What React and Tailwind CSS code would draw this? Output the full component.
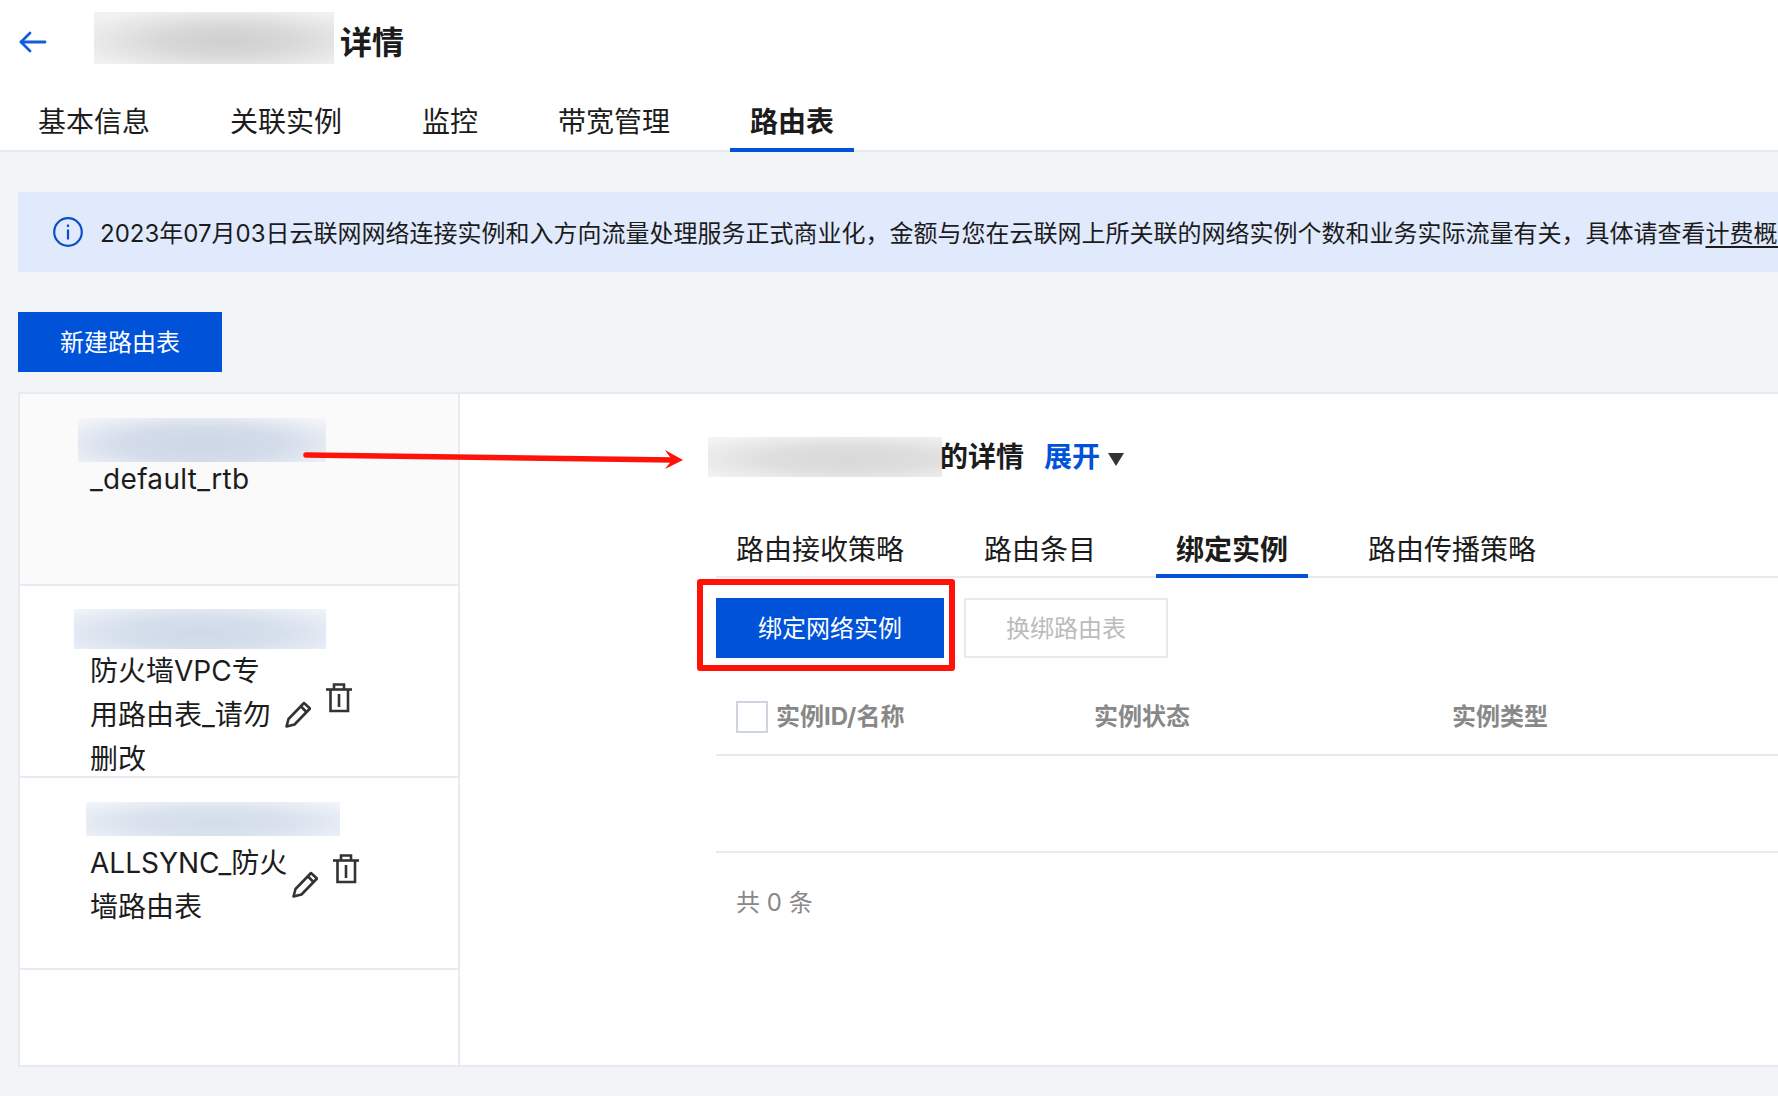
import React from "react";

const FONT = "[font-family:Inter,'Noto_Sans_CJK_SC',sans-serif]";

function BackArrow() {
  return (
    <svg width="28" height="24" viewBox="0 0 28 24" fill="none" stroke="#0f5fdb" strokeWidth="2.8" strokeLinecap="round" strokeLinejoin="round">
      <path d="M26 12H2" />
      <path d="M11 3 2 12 11 21" />
    </svg>
  );
}

function InfoIcon() {
  return (
    <svg width="30" height="30" viewBox="0 0 30 30" fill="none" stroke="#0a4fc4" strokeWidth="2.2">
      <circle cx="15" cy="15" r="13.8" />
      <path d="M15 12.5V22.5" />
      <path d="M15 7.5V10" />
    </svg>
  );
}

function PencilIcon() {
  return (
    <svg width="26" height="27" viewBox="0 0 26 27" fill="none" stroke="#333" strokeWidth="2.6" strokeLinejoin="round">
      <path d="M1.5 25.5 3.5 18 19 2 25 7.5 9.5 23.5Z" />
      <path d="M16 5.5 21.5 11" />
    </svg>
  );
}

function TrashIcon() {
  return (
    <svg width="26" height="30" viewBox="0 0 26 30" fill="none" stroke="#333" strokeWidth="2.6">
      <path d="M0 6.5H26" />
      <path d="M8 6V1.5H18V6" />
      <path d="M4.5 6.5V28H22V6.5" />
      <path d="M13 11V24" />
    </svg>
  );
}

function RedArrow() {
  return (
    <svg className="absolute left-[300px] top-[445px]" width="390" height="30" viewBox="0 0 390 30" fill="none">
      <path d="M6 10 373 15" stroke="#ff1208" strokeWidth="5.5" strokeLinecap="round" />
      <path d="M365 5 383 15 365 24 372 15Z" fill="#ff1208" />
    </svg>
  );
}

function Tab({ label, active, className }) {
  return (
    <div className={`flex items-center border-b-4 px-5 mb-[-2px] ${active ? "border-[#0052d9] font-bold" : "border-transparent"} ${className}`}>
      {label}
    </div>
  );
}

function RouteRow({ children, selected }) {
  return (
    <div className={`h-[192px] shrink-0 border-b-2 border-[#e7eaef] overflow-hidden ${selected ? "bg-[#fafafa]" : "bg-white"}`}>
      {children}
    </div>
  );
}

export default function App() {
  return (
    <div className={`w-[1778px] h-[1096px] relative overflow-hidden bg-[#f3f4f8] text-[#1c1c1c] ${FONT}`}>
      {/* header */}
      <div className="bg-white h-[152px] border-b-2 border-[#e7eaef]">
        <div className="h-[84px] flex items-center">
          <div className="ml-[19px] w-[75px] flex"><BackArrow /></div>
          <div className="w-[240px] h-[52px] mt-[-8px] bg-[radial-gradient(ellipse_at_55%_55%,#cfcfcf_0%,#d8d8d8_35%,#f1f1f1_85%)]" />
          <div className="ml-[6px] mt-[1px] text-[32px] font-bold leading-none">详情</div>
        </div>
        <div className="h-[66px] pl-[18px] flex text-[28px]">
          <Tab label="基本信息" className="mr-10 pt-3" />
          <Tab label="关联实例" className="mr-10 pt-3" />
          <Tab label="监控" className="mr-10 pt-3" />
          <Tab label="带宽管理" className="mr-10 pt-3" />
          <Tab label="路由表" active className="pt-3" />
        </div>
      </div>

      {/* notice */}
      <div className="ml-[18px] mt-[40px] h-[80px] bg-[#e1eafd] flex items-center whitespace-nowrap overflow-hidden text-[24px]">
        <div className="ml-[35px] mr-[17px] shrink-0 flex"><InfoIcon /></div>
        <span className="pt-[3px]">
          2023年07月03日云联网网络连接实例和入方向流量处理服务正式商业化，金额与您在云联网上所关联的网络实例个数和业务实际流量有关，具体请查看
          <span className="underline underline-offset-4">计费概述</span>
        </span>
      </div>

      <button className="block ml-[18px] mt-[40px] w-[204px] h-[60px] pt-[2px] bg-[#0052d9] text-white text-[24px]">新建路由表</button>

      {/* route tables + details */}
      <div className="ml-[18px] mt-[20px] h-[675px] bg-white border-2 border-r-0 border-[#e7eaef] flex">
        <div className="w-[440px] h-full border-r-2 border-[#e7eaef] flex flex-col text-[28px] leading-[44px]">
          <RouteRow selected>
            <div className="ml-[58px] mt-[24px] w-[248px] h-[44px] bg-[radial-gradient(ellipse_at_50%_60%,#cdd7e6_0%,#d4dcea_45%,#f3f5f9_95%)]" />
            <div className="ml-[70px] mt-[-5px] tracking-[0.3px]">_default_rtb</div>
          </RouteRow>
          <RouteRow>
            <div className="ml-[54px] mt-[23px] w-[252px] h-[40px] bg-[radial-gradient(ellipse_at_50%_60%,#cfd9e8_0%,#d6dfec_45%,#eff3f9_95%)]" />
            <div className="flex">
              <div className="ml-[70px] w-[195px] shrink-0">防火墙VPC专用路由表_请勿删改</div>
              <div className="mt-[52px] flex h-fit"><PencilIcon /></div>
              <div className="ml-[15px] mt-[34px] flex h-fit"><TrashIcon /></div>
            </div>
          </RouteRow>
          <RouteRow>
            <div className="ml-[66px] mt-[24px] w-[254px] h-[34px] bg-[radial-gradient(ellipse_at_50%_60%,#d3dcea_0%,#dae2ee_45%,#f1f4f9_95%)]" />
            <div className="flex mt-[5px]">
              <div className="ml-[70px] w-[200px] shrink-0">ALLSYNC_防火墙路由表</div>
              <div className="ml-[2px] mt-[30px] flex h-fit"><PencilIcon /></div>
              <div className="ml-[15px] mt-[13px] flex h-fit"><TrashIcon /></div>
            </div>
          </RouteRow>
        </div>

        <div className="flex-1 pl-[256px]">
          <div className="flex items-center h-[40px] mt-[43px] ml-[-8px]">
            <div className="w-[234px] h-[40px] bg-[radial-gradient(ellipse_at_60%_55%,#d9d9d9_0%,#dedede_40%,#f3f3f3_90%)]" />
            <div className="ml-[-2px] text-[28px] font-bold">的详情</div>
            <div className="ml-5 text-[28px] font-bold text-[#0052d9]">展开</div>
            <svg className="ml-2 mt-1" width="16" height="13" viewBox="0 0 16 13" fill="#333">
              <path d="M0 0H16L8 13Z" />
            </svg>
          </div>

          <div className="mt-[49px] h-[52px] flex border-b-2 border-[#e7eaef] text-[28px]">
            <Tab label="路由接收策略" className="mr-10" />
            <Tab label="路由条目" className="mr-10" />
            <Tab label="绑定实例" active className="mr-10" />
            <Tab label="路由传播策略" />
          </div>

          <div className="flex mt-[20px] text-[24px]">
            <button className="w-[228px] h-[60px] pt-[2px] bg-[#0052d9] text-white">绑定网络实例</button>
            <button className="ml-5 w-[204px] h-[60px] pt-[2px] bg-white border-2 border-[#e7eaef] text-[#bbb]">换绑路由表</button>
          </div>

          <div className="mt-[20px] h-[78px] pt-[2px] flex items-center border-b-2 border-[#e7eaef] text-[24px] font-bold text-[#888]">
            <div className="ml-5 w-8 h-8 border-2 border-[#cfd5de] bg-white shrink-0" />
            <div className="ml-2 w-[318px]">实例ID/名称</div>
            <div className="w-[358px]">实例状态</div>
            <div>实例类型</div>
          </div>
          <div className="h-[97px] border-b-2 border-[#e7eaef]" />
          <div className="ml-5 mt-[32px] text-[24px] text-[#888]">共 0 条</div>
        </div>
      </div>

      {/* annotations */}
      <RedArrow />
      <div className="absolute left-[697px] top-[579px] w-[258px] h-[92px] border-[6px] border-[#ff1208] rounded-[3px]" />
    </div>
  );
}
